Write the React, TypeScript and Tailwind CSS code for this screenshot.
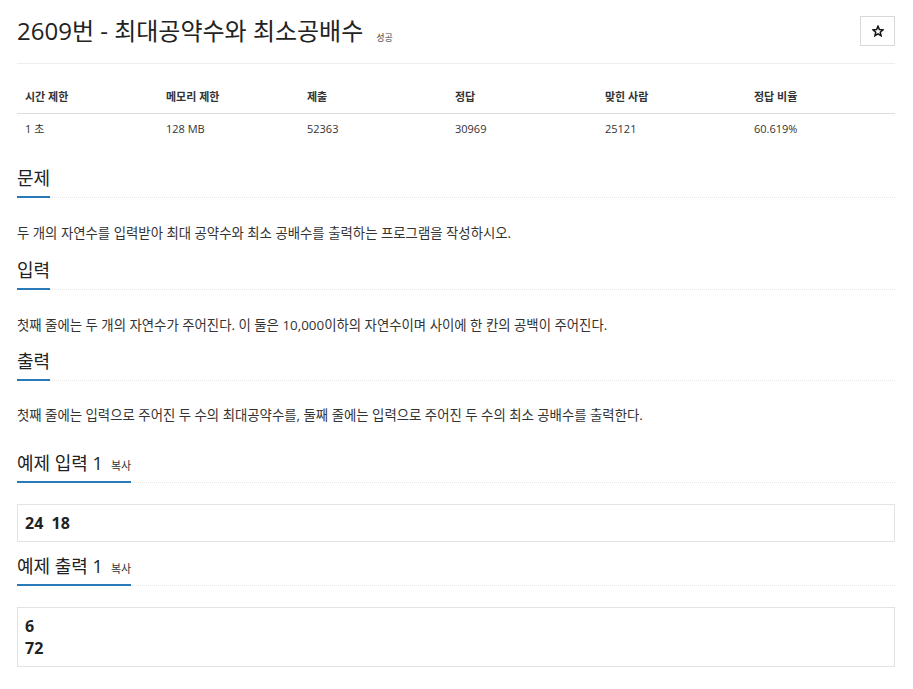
const font = "font-['Open_Sans','Noto_Sans_CJK_KR',sans-serif]";

const stats = [
  ["시간 제한", "1 초"],
  ["메모리 제한", "128 MB"],
  ["제출", "52363"],
  ["정답", "30969"],
  ["맞힌 사람", "25121"],
  ["정답 비율", "60.619%"],
];

const SectionTitle = ({ children, extra }: { children: React.ReactNode; extra?: string }) => (
  <div className="flex border-b border-dotted border-[#e6e6e6]">
    <h2 className="flex items-baseline border-b-2 border-[#2a7ab8] pb-[6px] -mb-px text-[18px] leading-[24px] font-normal text-[#222]">
      {children}
      {extra && <span className="ml-[8px] text-[11px] leading-none text-[#333]">{extra}</span>}
    </h2>
  </div>
);

const Paragraph = ({ children, className = "" }: { children: React.ReactNode; className?: string }) => (
  <p className={`text-[13.4px] leading-[20px] text-[#333] ${className}`}>{children}</p>
);

const SampleBox = ({ lines }: { lines: string[] }) => (
  <pre className={`mt-[21px] border border-[#e3e3e3] bg-white px-[7px] py-[7px] text-[16px] leading-[22px] font-bold text-[#222] whitespace-pre ${font}`}>
    {lines.join("\n")}
  </pre>
);

export default function App() {
  return (
    <div className={`min-h-screen bg-white pl-[17px] pr-[18px] ${font}`}>
      <div className="flex h-[64px] items-start justify-between border-b border-[#eeeeee]">
        <div className="flex items-end pt-[13px]">
          <h1 className="text-[24px] leading-[36px] font-normal text-[#222]">2609번 - 최대공약수와 최소공배수</h1>
          <span className="ml-[13px] mb-[7px] text-[9px] leading-none text-[#444]">성공</span>
        </div>
        <button className="mt-[16px] flex h-[30px] w-[35px] items-center justify-center border border-[#d8d8d8] bg-white">
          {/* outlined star */}
          <svg width="12" height="12" viewBox="0 0 24 24" fill="none" stroke="#111" strokeWidth="3" strokeLinejoin="miter">
            <path d="M12 2.5l2.8 6.6 7.1.6-5.4 4.7 1.6 7-6.1-3.7-6.1 3.7 1.6-7-5.4-4.7 7.1-.6z" />
          </svg>
        </button>
      </div>

      <div className="mt-[17px] text-[11px] text-[#333]">
        <div className="grid h-[33px] grid-cols-[141px_141px_148px_150px_149px_1fr] items-center border-b border-[#dddddd] font-bold">
          {stats.map(([label]) => (
            <div key={label} className="px-[8px]">{label}</div>
          ))}
        </div>
        <div className="grid h-[30px] grid-cols-[141px_141px_148px_150px_149px_1fr] items-center">
          {stats.map(([label, value]) => (
            <div key={label} className="px-[8px]">{value}</div>
          ))}
        </div>
      </div>

      <div className="mt-[22px]">
        <SectionTitle>문제</SectionTitle>
        <Paragraph className="mt-[25px]">두 개의 자연수를 입력받아 최대 공약수와 최소 공배수를 출력하는 프로그램을 작성하시오.</Paragraph>
      </div>

      <div className="mt-[15px]">
        <SectionTitle>입력</SectionTitle>
        <Paragraph className="mt-[25px]">첫째 줄에는 두 개의 자연수가 주어진다. 이 둘은 10,000이하의 자연수이며 사이에 한 칸의 공백이 주어진다.</Paragraph>
      </div>

      <div className="mt-[14px]">
        <SectionTitle>출력</SectionTitle>
        <Paragraph className="mt-[24px]">첫째 줄에는 입력으로 주어진 두 수의 최대공약수를, 둘째 줄에는 입력으로 주어진 두 수의 최소 공배수를 출력한다.</Paragraph>
      </div>

      <div className="mt-[26px]">
        <SectionTitle extra="복사">예제 입력 1</SectionTitle>
        <SampleBox lines={["24  18"]} />
      </div>

      <div className="mt-[12px] pb-[20px]">
        <SectionTitle extra="복사">예제 출력 1</SectionTitle>
        <SampleBox lines={["6", "72"]} />
      </div>
    </div>
  );
}
